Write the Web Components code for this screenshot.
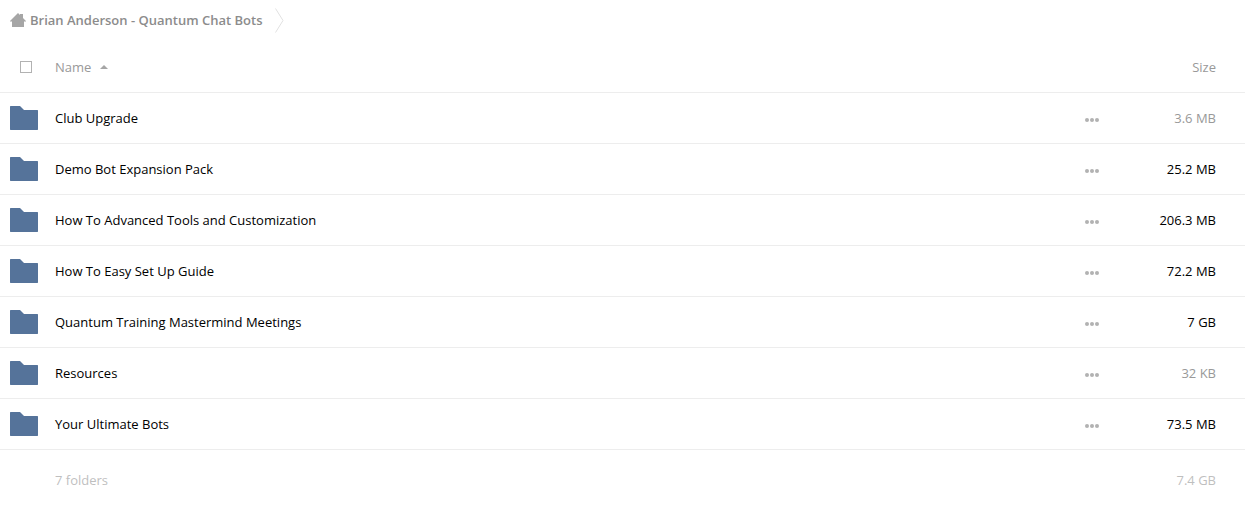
<!DOCTYPE html>
<html lang="en">
<head>
<meta charset="utf-8">
<meta name="viewport" content="width=device-width, initial-scale=1">
<title>Brian Anderson - Quantum Chat Bots</title>
<style>
  body {
    margin: 0;
    background: #fff;
    color: #000;
    font: 13px/20px "Open Sans", sans-serif;
  }
</style>
</head>
<body>
<file-browser></file-browser>

<script>
const FOLDERS = [
  { name: 'Club Upgrade', size: '3.6 MB', small: true },
  { name: 'Demo Bot Expansion Pack', size: '25.2 MB' },
  { name: 'How To Advanced Tools and Customization', size: '206.3 MB' },
  { name: 'How To Easy Set Up Guide', size: '72.2 MB' },
  { name: 'Quantum Training Mastermind Meetings', size: '7 GB' },
  { name: 'Resources', size: '32 KB', small: true },
  { name: 'Your Ultimate Bots', size: '73.5 MB' },
];

class FolderIcon extends HTMLElement {
  constructor() {
    super();
    this.attachShadow({ mode: 'open' });
  }

  connectedCallback() {
    this.shadowRoot.innerHTML = `
      <style>
        :host { display: block; }
        svg { display: block; }
      </style>
      <svg width="28" height="24" viewBox="0 0 28 24" fill="#55739a" aria-hidden="true">
        <path d="M.5 0H10l4 4h13.500l.5.500v19l-.5.500H.5L0 23.500V.5z"/>
      </svg>
    `;
  }
}

class MoreButton extends HTMLElement {
  constructor() {
    super();
    this.attachShadow({ mode: 'open' });
  }

  connectedCallback() {
    const label = this.getAttribute('label') || 'More';

    this.shadowRoot.innerHTML = `
      <style>
        :host { display: block; }
        button {
          display: block;
          padding: 10px 8px 6px;
          border: 0;
          background: none;
          color: #b2b2b2;
          cursor: pointer;
        }
        button:hover { color: #777; }
        svg { display: block; }
      </style>
      <button type="button" aria-label="${label}">
        <svg width="14" height="4" viewBox="0 0 14 4" fill="currentColor" aria-hidden="true">
          <circle cx="2" cy="2" r="2"/>
          <circle cx="7" cy="2" r="2"/>
          <circle cx="12" cy="2" r="2"/>
        </svg>
      </button>
    `;
  }
}

class BreadCrumb extends HTMLElement {
  constructor() {
    super();
    this.attachShadow({ mode: 'open' });
  }

  connectedCallback() {
    this.shadowRoot.innerHTML = `
      <style>
        :host {
          display: flex;
          align-items: center;
          gap: 12px;
          height: 40px;
          padding-left: 10px;
        }
        a {
          display: flex;
          align-items: center;
          gap: 4px;
          color: #8c8c8c;
          font-weight: 600;
          text-decoration: none;
        }
        svg { display: block; flex: none; }
      </style>
      <a href="#">
        <svg width="16" height="14" viewBox="0 0 16 14" fill="#a6a6a6" aria-hidden="true">
          <path d="M8 0l2 2V1h3v4l3 3v.500h-2V14H2V8.500H0V8z"/>
        </svg>
        <slot></slot>
      </a>
      <svg width="9" height="25" viewBox="0 0 9 25" fill="none" stroke="#e1e1e1" aria-hidden="true">
        <path d="M.5.5l7.500 12-7.500 12"/>
      </svg>
    `;
  }
}

class FileTable extends HTMLElement {
  #items = [];

  constructor() {
    super();
    this.attachShadow({ mode: 'open' });
  }

  set items(value) {
    this.#items = value;
    this.#render();
  }

  #row({ name, size, small }) {
    return `
      <tr>
        <td class="mark"><folder-icon></folder-icon></td>
        <td><a href="#">${name}</a></td>
        <td class="more"><more-button label="Actions for ${name}"></more-button></td>
        <td class="size ${small ? 'small' : ''}">${size}</td>
      </tr>
    `;
  }

  #render() {
    this.shadowRoot.innerHTML = `
      <style>
        :host { display: block; }
        table {
          width: 100%;
          border-collapse: separate;
          border-spacing: 0;
          table-layout: fixed;
        }
        th, td {
          box-sizing: border-box;
          height: 51px;
          padding: 0;
          border-bottom: 1px solid #ededed;
          font-weight: 400;
          text-align: left;
          vertical-align: middle;
        }
        thead th, thead td { color: #999; }
        tfoot td { height: 60px; border: 0; color: #bfbfbf; }
        .mark { width: 55px; padding-left: 10px; }
        .more { width: 38px; }
        .size { width: 130px; padding-right: 29px; text-align: right; }
        .small { color: #999; }
        a { color: inherit; text-decoration: none; }
        a:hover { text-decoration: underline; }
        button {
          display: inline-flex;
          align-items: center;
          gap: 9px;
          padding: 0;
          border: 0;
          background: none;
          color: inherit;
          font: inherit;
          cursor: pointer;
        }
        input {
          appearance: none;
          display: block;
          box-sizing: border-box;
          width: 12px;
          height: 12px;
          margin: 0 0 0 10px;
          border: 1px solid #b2b2b2;
          background: #fff;
        }
        input:checked { background: #b2b2b2; }
      </style>

      <table>
        <thead>
          <tr>
            <td class="mark"><input type="checkbox" aria-label="Select all"></td>
            <th scope="col" aria-sort="ascending">
              <button type="button">Name
                <svg width="8" height="4" viewBox="0 0 8 4" fill="#a6a6a6" aria-hidden="true">
                  <path d="M4 0l4 4H0z"/>
                </svg>
              </button>
            </th>
            <td class="more"></td>
            <th scope="col" class="size">Size</th>
          </tr>
        </thead>
        <tbody>${this.#items.map(item => this.#row(item)).join('')}</tbody>
        <tfoot>
          <tr>
            <td class="mark"></td>
            <td>${this.#items.length} folders</td>
            <td class="more"></td>
            <td class="size">7.4 GB</td>
          </tr>
        </tfoot>
      </table>
    `;
  }
}

class FileBrowser extends HTMLElement {
  constructor() {
    super();
    this.attachShadow({ mode: 'open' });
  }

  connectedCallback() {
    this.shadowRoot.innerHTML = `
      <style>
        :host {
          display: flex;
          flex-direction: column;
          gap: 2px;
        }
      </style>
      <bread-crumb>Brian Anderson - Quantum Chat Bots</bread-crumb>
      <file-table></file-table>
    `;
    this.shadowRoot.querySelector('file-table').items = FOLDERS;
  }
}

customElements.define('folder-icon', FolderIcon);
customElements.define('more-button', MoreButton);
customElements.define('bread-crumb', BreadCrumb);
customElements.define('file-table', FileTable);
customElements.define('file-browser', FileBrowser);
</script>
</body>
</html>
